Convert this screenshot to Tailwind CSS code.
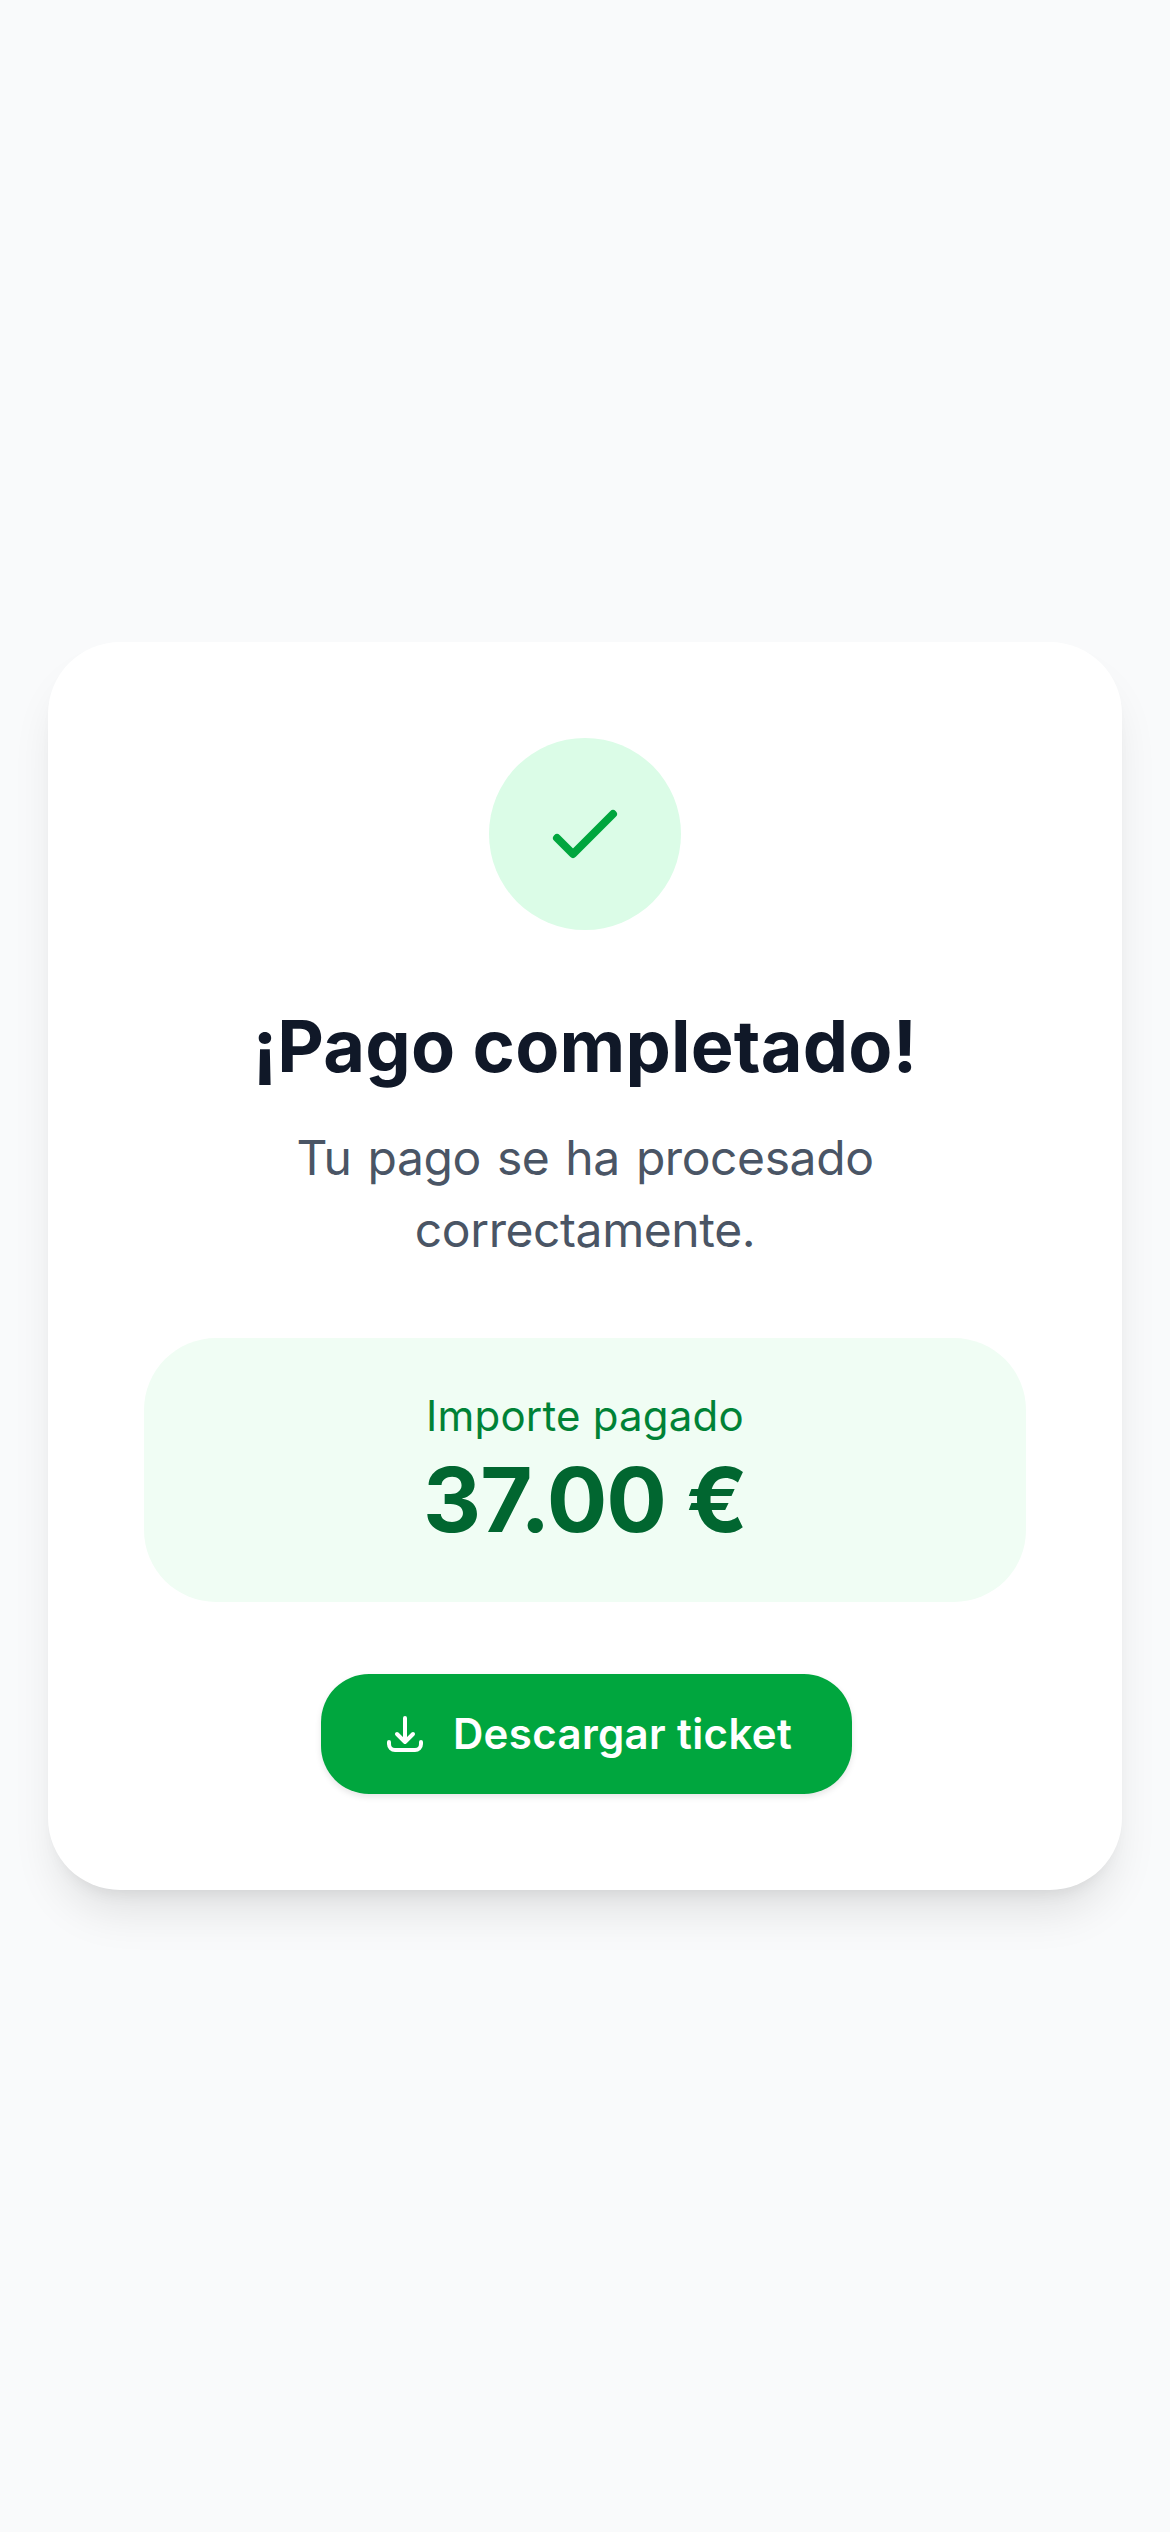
<!DOCTYPE html>
<html lang="es">
<head>
  <meta charset="UTF-8">
  <title>Pago completado</title>
  <script src="https://cdn.jsdelivr.net/npm/@tailwindcss/browser@4"></script>
</head>
<body class="bg-gray-50 font-['Inter',sans-serif]">
  <div class="h-[2532px] flex items-center justify-center px-[48px]">
    <!-- Tarjeta -->
    <div class="w-full bg-white rounded-[72px] p-[96px] flex flex-col items-center text-center shadow-[0_30px_45px_-9px_rgb(0_0_0/0.1),0_12px_18px_-12px_rgb(0_0_0/0.1)]">
      <div class="w-[192px] h-[192px] rounded-full bg-green-100 flex items-center justify-center mb-[68px]">
        <svg class="w-[96px] h-[96px] text-green-600" viewBox="0 0 24 24" fill="none" stroke="currentColor" stroke-width="2" stroke-linecap="round" stroke-linejoin="round">
          <path d="M5 13l4 4L19 7"/>
        </svg>
      </div>
      <h1 class="text-[72px] leading-[96px] font-bold tracking-[0.2px] text-gray-900 mb-[28px]">¡Pago completado!</h1>
      <p class="text-[48px] leading-[72px] tracking-[-0.41px] [word-spacing:2.9px] text-gray-600 mb-[72px]">Tu pago se ha procesado correctamente.</p>
      <!-- Importe -->
      <div class="w-full bg-green-50 rounded-[72px] p-[48px] mb-[72px]">
        <p class="text-[42px] leading-[60px] tracking-[0.2px] text-green-700">Importe pagado</p>
        <p class="text-[90px] leading-[108px] font-bold tracking-[-1px] text-green-800">37.00 €</p>
      </div>
      <button class="ml-[3px] flex items-center gap-[24px] bg-green-600 text-white rounded-[48px] pl-[60px] pr-[60px] py-[24px] text-[42px] leading-[72px] tracking-[0.35px] font-semibold shadow-[0_3px_6px_0_rgb(0_0_0/0.1)]">
        <svg class="w-[48px] h-[48px]" viewBox="0 0 24 24" fill="none" stroke="currentColor" stroke-width="2" stroke-linecap="round" stroke-linejoin="round">
          <path d="M4 16v1a3 3 0 003 3h10a3 3 0 003-3v-1m-4-4l-4 4m0 0l-4-4m4 4V4"/>
        </svg>
        Descargar ticket
      </button>
    </div>
  </div>
</body>
</html>
